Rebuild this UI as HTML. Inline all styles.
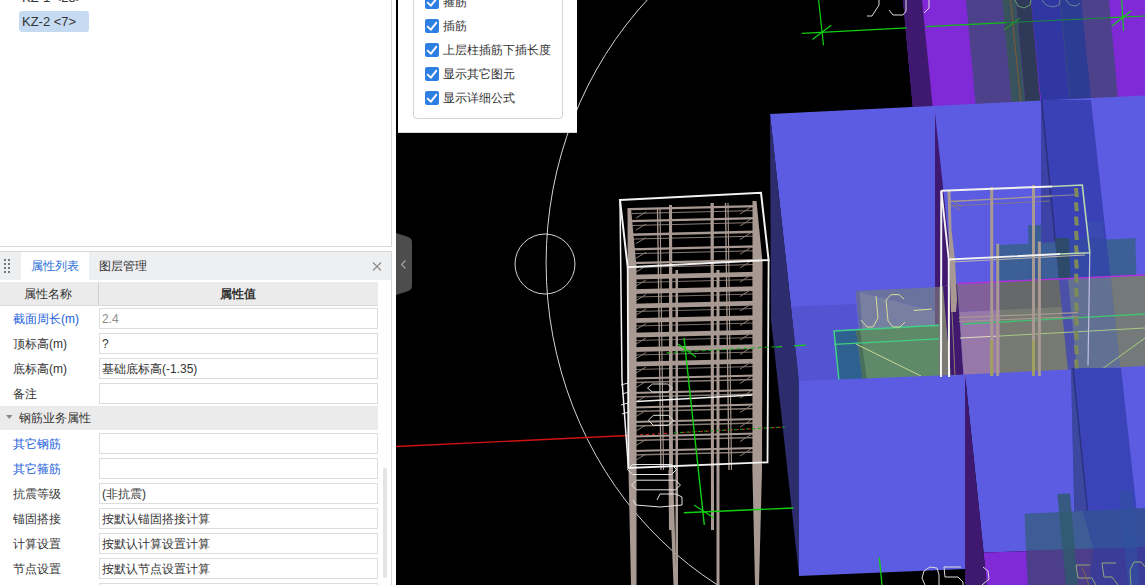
<!DOCTYPE html>
<html><head><meta charset="utf-8">
<style>
html,body{margin:0;padding:0;width:1145px;height:585px;overflow:hidden;background:#fff;font-family:"Liberation Sans",sans-serif;font-size:12px;color:#333;}
.a{position:absolute;}
#vp{position:absolute;left:0;top:0;}
.lbl{position:absolute;left:13px;font-size:12px;color:#333;line-height:14px;white-space:nowrap;}
.blue{color:#2160dc;}
.inp{position:absolute;left:99px;width:277px;height:19px;border:1px solid #dddddd;background:#fff;}
.val{position:absolute;left:102px;font-size:12px;color:#333;line-height:14px;white-space:nowrap;}
.cb{position:absolute;left:425px;width:14px;height:14px;background:#2f7ee2;border-radius:2px;}
.cbt{position:absolute;left:443px;font-size:12px;color:#333;line-height:14px;white-space:nowrap;}
</style></head><body>
<!-- VIEWPORT -->
<svg id="vp" width="1145" height="585" viewBox="0 0 1145 585">
<rect x="396" y="0" width="749" height="585" fill="#000"/>
<!-- VPCONTENT -->
<ellipse cx="898.4" cy="263" rx="352.3" ry="375.2" fill="none" stroke="#d4d4d4" stroke-width="1"/>
<circle cx="545" cy="264" r="30" fill="none" stroke="#d4d4d4" stroke-width="1"/>
<line x1="396.0" y1="446.5" x2="628.0" y2="435.5" stroke="#d01212" stroke-width="1.4"/>
<line x1="628.0" y1="435.5" x2="785.0" y2="427.0" stroke="#c02020" stroke-width="1.2" stroke-dasharray="3,3"/>
<polygon points="903.0,0.0 1145.0,0.0 1145.0,120.0 914.0,120.0" fill="#8029d6"/>
<polygon points="903.0,0.0 922.0,0.0 934.0,120.0 914.0,120.0" fill="#3f1870"/>
<polygon points="966.0,0.0 1002.0,0.0 1013.0,120.0 977.0,120.0" fill="#4e418c"/>
<polygon points="1002.0,0.0 1016.0,0.0 1027.0,120.0 1013.0,120.0" fill="#38525e"/>
<polygon points="1016.0,0.0 1031.0,0.0 1042.0,120.0 1027.0,120.0" fill="#2e3a58"/>
<polygon points="1080.0,0.0 1109.0,0.0 1120.0,120.0 1093.0,120.0" fill="#4e418c"/>
<polygon points="1031.0,0.0 1081.0,0.0 1093.0,120.0 1043.0,120.0" fill="#3137a2"/>
<polygon points="1060.0,0.0 1081.0,0.0 1093.0,120.0 1072.0,120.0" fill="#2c3c92"/>
<line x1="1010.5" y1="0.0" x2="1022.5" y2="120.0" stroke="#8a5a30" stroke-width="0.9"/>
<line x1="1060.0" y1="0.0" x2="1072.0" y2="120.0" stroke="#3a4a80" stroke-width="0.8"/>
<polyline points="867.0,16.0 872.0,16.0 879.0,5.0 879.0,0.0" fill="none" stroke="#dcdcdc" stroke-width="1"/>
<polyline points="889.0,10.0 893.0,15.0 903.0,15.0 906.0,11.0 906.0,0.0" fill="none" stroke="#dcdcdc" stroke-width="1"/>
<polyline points="924.0,13.0 929.0,8.0 929.0,0.0" fill="none" stroke="#dcdcdc" stroke-width="1"/>
<polyline points="1015.0,0.0 1018.0,6.0 1024.0,8.0 1030.0,5.0 1031.0,0.0" fill="none" stroke="#6a9a70" stroke-width="1"/>
<polyline points="1042.0,0.0 1046.0,5.0 1053.0,7.0 1059.0,5.0 1060.0,0.0" fill="none" stroke="#6a80a0" stroke-width="1"/>
<polyline points="1066.0,0.0 1070.0,5.0 1076.0,6.0 1080.0,3.0" fill="none" stroke="#6a80a0" stroke-width="1"/>
<line x1="801.9" y1="33.3" x2="906.7" y2="27.9" stroke="#12d012" stroke-width="1.3"/>
<line x1="926.0" y1="26.6" x2="1006.0" y2="22.7" stroke="#10c010" stroke-width="1.2"/>
<line x1="1006.0" y1="22.7" x2="1110.0" y2="17.7" stroke="#1a8a3a" stroke-width="1"/>
<line x1="1110.0" y1="17.7" x2="1145.0" y2="16.0" stroke="#10c010" stroke-width="1.2"/>
<line x1="818.6" y1="0.0" x2="823.5" y2="45.4" stroke="#12d012" stroke-width="1.2"/>
<line x1="812.4" y1="39.5" x2="831.2" y2="25.2" stroke="#12d012" stroke-width="1.2"/>
<line x1="1121.7" y1="0.0" x2="1123.5" y2="31.0" stroke="#12d012" stroke-width="1.1"/>
<line x1="1112.0" y1="26.0" x2="1131.0" y2="11.0" stroke="#12d012" stroke-width="1.1"/>
<line x1="1004.0" y1="30.0" x2="1020.0" y2="18.0" stroke="#10b010" stroke-width="1"/>
<polygon points="770.0,114.0 1145.0,95.5 1145.0,381.0 799.0,381.0" fill="#5c5ce2"/>
<polygon points="770.0,114.0 799.0,379.0 799.0,576.0 771.0,320.0" fill="#2d2d6e"/>
<polygon points="935.0,113.0 963.5,377.0 935.0,377.0" fill="#3f1870"/>
<polygon points="791.5,306.5 856.0,304.0 863.0,381.0 799.0,381.0" fill="#5454d3"/>
<polygon points="1041.0,100.0 1091.0,100.0 1121.8,380.0 1069.0,380.0" fill="#3a40b6"/>
<polygon points="1041.0,99.0 1069.0,380.0 1041.0,380.0" fill="#3c42a6"/>
<line x1="1041.5" y1="100.0" x2="1069.0" y2="380.0" stroke="#2c3080" stroke-width="1.6"/>
<polygon points="995.3,245.3 1135.4,238.0 1137.0,300.0 997.0,300.0" fill="#3d5f98"/>
<polygon points="1028.0,225.3 1041.0,225.0 1043.0,300.0 1030.0,300.0" fill="#3a5e94"/>
<polygon points="1054.8,238.0 1106.2,238.0 1113.0,300.0 1061.0,300.0" fill="#3448a6"/>
<polygon points="1054.8,238.0 1068.8,238.0 1071.0,300.0 1061.0,300.0" fill="#2e4a6a"/>
<polygon points="1087.6,221.4 1103.0,221.0 1104.0,238.0 1089.0,238.0" fill="#3a4ab0"/>
<polygon points="856.0,291.0 939.0,287.0 939.0,312.5" fill="#6a729e"/>
<polygon points="856.0,291.0 939.0,312.5 939.0,381.0 863.0,381.0" fill="#7880a2"/>
<polygon points="856.0,291.0 859.5,291.0 866.0,381.0 863.0,381.0" fill="#646a9c"/>
<polygon points="935.0,287.2 939.0,287.0 939.0,381.0 935.0,381.0" fill="#6a5878"/>
<polygon points="939.0,287.0 958.0,283.5 963.5,381.0 939.0,381.0" fill="#7c7872"/>
<polygon points="943.0,286.5 957.0,284.0 963.5,377.0 951.0,377.0" fill="#40186e"/>
<polygon points="958.0,283.5 1000.0,281.6 1000.0,310.0 959.6,312.0" fill="#82609a"/>
<polygon points="959.6,312.0 1000.0,310.0 1000.0,381.0 964.0,381.0" fill="#9878a8"/>
<polygon points="1000.0,281.6 1145.0,275.0 1145.0,381.0 1000.0,381.0" fill="#767a72"/>
<polygon points="1000.0,281.6 1145.0,275.0 1145.0,303.0 1000.0,310.0" fill="#66686a"/>
<polygon points="1058.8,278.4 1110.6,276.0 1121.9,381.0 1069.1,381.0" fill="#627094"/>
<polygon points="1058.8,278.4 1067.8,278.0 1078.1,381.0 1069.1,381.0" fill="#4c50a8"/>
<polygon points="1110.6,276.0 1145.0,275.0 1145.0,381.0 1121.9,381.0" fill="#747a7a"/>
<line x1="958.0" y1="283.5" x2="1145.0" y2="275.0" stroke="#b030e0" stroke-width="1.3"/>
<polygon points="834.0,331.0 856.0,329.8 863.0,381.0 839.0,381.0" fill="#2e6090"/>
<polygon points="856.0,329.8 939.0,325.3 939.0,381.0 863.0,381.0" fill="#5e8a6a"/>
<polygon points="856.0,329.8 860.0,329.6 867.0,381.0 863.0,381.0" fill="#4a6e5c"/>
<polygon points="939.0,325.3 963.5,324.0 963.5,381.0 939.0,381.0" fill="#3a2a68" fill-opacity="0.0"/>
<polyline points="839.0,381.0 834.0,331.0 939.0,325.3" fill="none" stroke="#40d088" stroke-width="1.5"/>
<line x1="963.0" y1="324.0" x2="1145.0" y2="314.0" stroke="#40c070" stroke-width="1.3"/>
<line x1="834.0" y1="344.4" x2="939.0" y2="338.9" stroke="#40d080" stroke-width="1.4"/>
<line x1="960.0" y1="338.0" x2="1000.0" y2="336.0" stroke="#e0dcc0" stroke-width="1.1"/>
<line x1="1000.0" y1="336.0" x2="1145.0" y2="328.0" stroke="#a8c888" stroke-width="1"/>
<line x1="856.0" y1="344.0" x2="921.0" y2="376.0" stroke="#c8d890" stroke-width="1"/>
<line x1="1098.0" y1="372.0" x2="1145.0" y2="338.0" stroke="#a8d080" stroke-width="1"/>
<polyline points="876.0,296.0 878.0,318.0 873.0,327.0 867.0,327.0 861.0,320.0" fill="none" stroke="#d8dc98" stroke-width="1"/>
<polyline points="904.0,299.0 899.0,294.6 891.0,294.6 886.0,300.0 888.0,321.0 893.0,327.0 900.0,327.0 905.0,322.0" fill="none" stroke="#d8dc98" stroke-width="1"/>
<line x1="913.8" y1="310.5" x2="931.8" y2="309.0" stroke="#d8dc98" stroke-width="1.1"/>
<polygon points="799.0,381.0 965.0,374.5 965.0,569.0 799.0,576.0" fill="#5c5ce2"/>
<polygon points="965.0,374.5 1145.0,366.0 1145.0,547.7 983.6,552.6" fill="#5c5ce2"/>
<polygon points="983.6,552.6 1145.0,547.7 1145.0,585.0 986.5,585.0" fill="#8029d6"/>
<polygon points="965.0,374.5 987.0,585.0 965.0,585.0" fill="#3f1870"/>
<polygon points="1071.0,368.0 1121.0,368.0 1145.0,585.0 1076.0,585.0" fill="#3a44b8"/>
<polygon points="1071.0,368.0 1073.0,368.0 1095.0,585.0 1076.0,585.0" fill="#3c48a0"/>
<line x1="1073.0" y1="368.0" x2="1095.0" y2="585.0" stroke="#2c3282" stroke-width="1.5"/>
<polygon points="1024.6,513.8 1083.0,511.0 1094.0,550.0 1026.0,550.5" fill="#3e5c96"/>
<polygon points="1026.0,550.5 1094.0,548.5 1089.0,585.0 1027.8,585.0" fill="#4c3e8a"/>
<polygon points="1083.0,511.0 1145.0,508.0 1145.0,550.0 1094.0,550.0" fill="#34509c"/>
<polygon points="1094.0,548.5 1145.0,547.0 1145.0,585.0 1089.0,585.0" fill="#3a3c98"/>
<polygon points="1057.3,494.0 1070.0,493.6 1078.0,585.0 1066.0,585.0" fill="#2e5a6a" fill-opacity="0.8"/>
<polygon points="1119.0,490.8 1132.3,490.5 1140.0,585.0 1128.0,585.0" fill="#3050a0" fill-opacity="0.6"/>
<polyline points="1096.0,585.0 1092.0,578.0 1078.0,578.0 1076.0,565.0 1090.0,565.0" fill="none" stroke="#90a878" stroke-width="1"/>
<polyline points="1118.0,585.0 1112.0,577.0 1104.0,577.0 1102.0,563.0 1116.0,563.0" fill="none" stroke="#90a878" stroke-width="1"/>
<polyline points="1131.0,585.0 1130.0,570.0 1134.0,562.0 1141.0,562.0 1145.0,567.0" fill="none" stroke="#90a878" stroke-width="1"/>
<line x1="1082.0" y1="567.0" x2="1089.0" y2="585.0" stroke="#8a7040" stroke-width="0.8"/>
<polyline points="925.0,585.0 922.0,578.0 924.0,571.0 930.0,567.0 937.0,568.0 939.0,575.0 939.0,585.0" fill="none" stroke="#dcdcdc" stroke-width="1"/>
<polyline points="961.0,567.0 944.0,567.0 945.0,577.0 958.0,577.0 963.0,582.0 963.0,585.0" fill="none" stroke="#dcdcdc" stroke-width="1"/>
<polyline points="982.0,585.0 989.0,579.0 988.0,571.0 983.0,567.0" fill="none" stroke="#dcdcdc" stroke-width="1"/>
<line x1="879.3" y1="557.5" x2="882.0" y2="585.0" stroke="#12d012" stroke-width="1.3"/>
<polygon points="630.0,208.0 757.0,205.0 757.0,207.3 630.0,210.3" fill="#a89a92"/>
<line x1="632.0" y1="213.5" x2="757.0" y2="210.5" stroke="#8a7d76" stroke-width="1"/>
<polygon points="630.0,220.0 757.0,217.0 757.0,219.3 630.0,222.3" fill="#a89a92"/>
<line x1="632.0" y1="225.5" x2="757.0" y2="222.5" stroke="#8a7d76" stroke-width="1"/>
<polygon points="630.0,233.6 757.0,230.6 757.0,232.9 630.0,235.9" fill="#a89a92"/>
<line x1="632.0" y1="239.1" x2="757.0" y2="236.1" stroke="#8a7d76" stroke-width="1"/>
<polygon points="630.0,248.2 757.0,245.2 757.0,247.5 630.0,250.5" fill="#a89a92"/>
<line x1="632.0" y1="253.7" x2="757.0" y2="250.7" stroke="#8a7d76" stroke-width="1"/>
<polygon points="630.0,262.0 757.0,259.0 757.0,261.3 630.0,264.3" fill="#a89a92"/>
<line x1="632.0" y1="267.5" x2="757.0" y2="264.5" stroke="#8a7d76" stroke-width="1"/>
<polygon points="632.0,274.7 757.0,271.7 757.0,276.5 632.0,279.5" fill="#a89a92"/>
<line x1="636.0" y1="282.5" x2="756.0" y2="279.5" stroke="#8a7d76" stroke-width="0.9"/>
<polygon points="632.0,289.2 757.0,286.2 757.0,291.0 632.0,294.0" fill="#a89a92"/>
<line x1="636.0" y1="297.0" x2="756.0" y2="294.0" stroke="#8a7d76" stroke-width="0.9"/>
<polygon points="632.0,303.7 757.0,300.7 757.0,305.5 632.0,308.5" fill="#a89a92"/>
<line x1="636.0" y1="311.5" x2="756.0" y2="308.5" stroke="#8a7d76" stroke-width="0.9"/>
<polygon points="632.0,318.2 757.0,315.2 757.0,320.0 632.0,323.0" fill="#a89a92"/>
<line x1="636.0" y1="326.0" x2="756.0" y2="323.0" stroke="#8a7d76" stroke-width="0.9"/>
<polygon points="632.0,332.7 757.0,329.7 757.0,334.5 632.0,337.5" fill="#a89a92"/>
<line x1="636.0" y1="340.5" x2="756.0" y2="337.5" stroke="#8a7d76" stroke-width="0.9"/>
<polygon points="632.0,347.2 757.0,344.2 757.0,349.0 632.0,352.0" fill="#a89a92"/>
<line x1="636.0" y1="355.0" x2="756.0" y2="352.0" stroke="#8a7d76" stroke-width="0.9"/>
<polygon points="632.0,361.7 757.0,358.7 757.0,363.5 632.0,366.5" fill="#a89a92"/>
<line x1="636.0" y1="369.5" x2="756.0" y2="366.5" stroke="#8a7d76" stroke-width="0.9"/>
<line x1="632.0" y1="378.5" x2="757.0" y2="375.5" stroke="#a89a92" stroke-width="2"/>
<line x1="632.0" y1="382.5" x2="757.0" y2="379.5" stroke="#8a7d76" stroke-width="1.3"/>
<line x1="632.0" y1="393.0" x2="757.0" y2="390.0" stroke="#a89a92" stroke-width="2"/>
<line x1="632.0" y1="397.0" x2="757.0" y2="394.0" stroke="#8a7d76" stroke-width="1.3"/>
<line x1="632.0" y1="407.5" x2="757.0" y2="404.5" stroke="#a89a92" stroke-width="2"/>
<line x1="632.0" y1="411.5" x2="757.0" y2="408.5" stroke="#8a7d76" stroke-width="1.3"/>
<line x1="632.0" y1="422.0" x2="757.0" y2="419.0" stroke="#a89a92" stroke-width="2"/>
<line x1="632.0" y1="426.0" x2="757.0" y2="423.0" stroke="#8a7d76" stroke-width="1.3"/>
<line x1="632.0" y1="436.5" x2="757.0" y2="433.5" stroke="#a89a92" stroke-width="2"/>
<line x1="632.0" y1="440.5" x2="757.0" y2="437.5" stroke="#8a7d76" stroke-width="1.3"/>
<line x1="632.0" y1="451.0" x2="757.0" y2="448.0" stroke="#a89a92" stroke-width="2"/>
<line x1="632.0" y1="455.0" x2="757.0" y2="452.0" stroke="#8a7d76" stroke-width="1.3"/>
<line x1="636.0" y1="218.0" x2="646.0" y2="212.0" stroke="#8a7d76" stroke-width="1"/>
<line x1="740.0" y1="214.0" x2="751.0" y2="207.0" stroke="#8a7d76" stroke-width="1"/>
<line x1="636.0" y1="230.0" x2="646.0" y2="224.0" stroke="#8a7d76" stroke-width="1"/>
<line x1="740.0" y1="226.0" x2="751.0" y2="219.0" stroke="#8a7d76" stroke-width="1"/>
<line x1="636.0" y1="243.6" x2="646.0" y2="237.6" stroke="#8a7d76" stroke-width="1"/>
<line x1="740.0" y1="239.6" x2="751.0" y2="232.6" stroke="#8a7d76" stroke-width="1"/>
<line x1="636.0" y1="258.2" x2="646.0" y2="252.2" stroke="#8a7d76" stroke-width="1"/>
<line x1="740.0" y1="254.2" x2="751.0" y2="247.2" stroke="#8a7d76" stroke-width="1"/>
<line x1="636.0" y1="272.0" x2="646.0" y2="266.0" stroke="#8a7d76" stroke-width="1"/>
<line x1="740.0" y1="268.0" x2="751.0" y2="261.0" stroke="#8a7d76" stroke-width="1"/>
<line x1="636.0" y1="286.0" x2="646.0" y2="280.0" stroke="#8a7d76" stroke-width="1"/>
<line x1="740.0" y1="282.0" x2="751.0" y2="275.0" stroke="#8a7d76" stroke-width="1"/>
<line x1="636.0" y1="300.5" x2="646.0" y2="294.5" stroke="#8a7d76" stroke-width="1"/>
<line x1="740.0" y1="296.5" x2="751.0" y2="289.5" stroke="#8a7d76" stroke-width="1"/>
<line x1="636.0" y1="315.0" x2="646.0" y2="309.0" stroke="#8a7d76" stroke-width="1"/>
<line x1="740.0" y1="311.0" x2="751.0" y2="304.0" stroke="#8a7d76" stroke-width="1"/>
<line x1="636.0" y1="329.5" x2="646.0" y2="323.5" stroke="#8a7d76" stroke-width="1"/>
<line x1="740.0" y1="325.5" x2="751.0" y2="318.5" stroke="#8a7d76" stroke-width="1"/>
<line x1="636.0" y1="344.0" x2="646.0" y2="338.0" stroke="#8a7d76" stroke-width="1"/>
<line x1="740.0" y1="340.0" x2="751.0" y2="333.0" stroke="#8a7d76" stroke-width="1"/>
<line x1="636.0" y1="358.5" x2="646.0" y2="352.5" stroke="#8a7d76" stroke-width="1"/>
<line x1="740.0" y1="354.5" x2="751.0" y2="347.5" stroke="#8a7d76" stroke-width="1"/>
<line x1="636.0" y1="373.0" x2="646.0" y2="367.0" stroke="#8a7d76" stroke-width="1"/>
<line x1="740.0" y1="369.0" x2="751.0" y2="362.0" stroke="#8a7d76" stroke-width="1"/>
<line x1="636.0" y1="387.5" x2="646.0" y2="381.5" stroke="#8a7d76" stroke-width="1"/>
<line x1="740.0" y1="383.5" x2="751.0" y2="376.5" stroke="#8a7d76" stroke-width="1"/>
<line x1="636.0" y1="402.0" x2="646.0" y2="396.0" stroke="#8a7d76" stroke-width="1"/>
<line x1="740.0" y1="398.0" x2="751.0" y2="391.0" stroke="#8a7d76" stroke-width="1"/>
<line x1="636.0" y1="416.5" x2="646.0" y2="410.5" stroke="#8a7d76" stroke-width="1"/>
<line x1="740.0" y1="412.5" x2="751.0" y2="405.5" stroke="#8a7d76" stroke-width="1"/>
<line x1="636.0" y1="431.0" x2="646.0" y2="425.0" stroke="#8a7d76" stroke-width="1"/>
<line x1="740.0" y1="427.0" x2="751.0" y2="420.0" stroke="#8a7d76" stroke-width="1"/>
<line x1="636.0" y1="445.5" x2="646.0" y2="439.5" stroke="#8a7d76" stroke-width="1"/>
<line x1="740.0" y1="441.5" x2="751.0" y2="434.5" stroke="#8a7d76" stroke-width="1"/>
<line x1="636.0" y1="460.0" x2="646.0" y2="454.0" stroke="#8a7d76" stroke-width="1"/>
<line x1="740.0" y1="456.0" x2="751.0" y2="449.0" stroke="#8a7d76" stroke-width="1"/>
<polygon points="627.5,208.0 631.0,208.0 636.5,267.0 636.5,585.0 631.0,585.0 628.5,470.0" fill="#a89a92"/>
<polygon points="752.5,201.0 756.5,201.0 762.5,262.0 762.0,470.0 759.0,585.0 755.0,585.0 752.4,470.0" fill="#a89a92"/>
<polygon points="669.0,205.0 672.0,205.0 673.0,470.0 676.5,585.0 673.5,585.0 669.0,470.0" fill="#a89a92"/>
<polygon points="675.5,270.0 678.0,270.0 678.0,585.0 675.5,585.0" fill="#a89a92"/>
<polygon points="710.5,203.0 713.8,203.0 714.0,530.0 711.0,530.0" fill="#a89a92"/>
<polygon points="716.5,270.0 719.5,270.0 719.5,585.0 716.5,585.0" fill="#a89a92"/>
<polygon points="668.5,470.0 671.5,470.0 672.0,530.0 669.0,530.0" fill="#a89a92"/>
<line x1="657.5" y1="208.0" x2="661.0" y2="470.0" stroke="#a89a92" stroke-width="1.3"/>
<line x1="660.0" y1="208.0" x2="663.5" y2="470.0" stroke="#a89a92" stroke-width="1.1"/>
<line x1="725.5" y1="203.0" x2="729.0" y2="470.0" stroke="#a89a92" stroke-width="1.3"/>
<line x1="728.0" y1="203.0" x2="731.5" y2="470.0" stroke="#a89a92" stroke-width="1.1"/>
<polygon points="620.0,200.0 761.0,192.7 768.6,260.0 627.7,267.2" fill="none" stroke="#f2f2f2" stroke-width="2"/>
<polyline points="627.7,267.2 628.4,468.0 767.5,462.3 768.6,260.0" fill="none" stroke="#f2f2f2" stroke-width="1.8"/>
<polyline points="620.0,200.0 621.0,290.0 622.0,380.0 628.4,468.0" fill="none" stroke="#f2f2f2" stroke-width="1.5"/>
<line x1="636.5" y1="401.4" x2="752.4" y2="395.1" stroke="#f2f2f2" stroke-width="1.5"/>
<polygon points="627.5,469.5 632.5,464.5 671.5,464.5 676.5,469.5 671.5,474.5 632.5,474.5" fill="none" stroke="#e6e6e6" stroke-width="1"/>
<polygon points="631.5,485.0 636.5,480.2 675.5,480.2 680.5,485.0 675.5,489.8 636.5,489.8" fill="none" stroke="#e6e6e6" stroke-width="1"/>
<polyline points="633.0,500.0 636.0,505.0 660.0,507.0 682.0,505.0 682.0,497.0 676.0,494.0 660.0,494.0 657.0,500.0" fill="none" stroke="#e6e6e6" stroke-width="1"/>
<polygon points="648.3,420.3 653.3,415.3 668.3,415.3 673.3,420.3 668.3,425.3 653.3,425.3" fill="none" stroke="#e6e6e6" stroke-width="1"/>
<polygon points="647.5,388.0 652.5,384.0 667.5,384.0 672.5,388.0 667.5,392.0 652.5,392.0" fill="none" stroke="#d8d8d8" stroke-width="1"/>
<polyline points="621.0,385.0 628.0,383.0 629.0,392.0 622.0,394.0" fill="none" stroke="#e6e6e6" stroke-width="1"/>
<polyline points="621.0,405.0 628.0,403.0 629.0,412.0 622.0,414.0" fill="none" stroke="#e6e6e6" stroke-width="1"/>
<line x1="684.0" y1="337.8" x2="704.3" y2="524.8" stroke="#12d012" stroke-width="1.4"/>
<line x1="683.8" y1="512.8" x2="793.4" y2="508.0" stroke="#12d012" stroke-width="1.4"/>
<line x1="694.0" y1="505.0" x2="714.0" y2="518.0" stroke="#12d012" stroke-width="1.2"/>
<line x1="678.0" y1="344.0" x2="696.0" y2="357.0" stroke="#12d012" stroke-width="1.2"/>
<line x1="666.7" y1="352.7" x2="776.7" y2="346.7" stroke="#10b010" stroke-width="1" stroke-dasharray="4,3"/>
<line x1="776.0" y1="347.0" x2="782.0" y2="346.7" stroke="#12d012" stroke-width="1.2"/>
<line x1="794.0" y1="345.8" x2="806.0" y2="345.2" stroke="#12d012" stroke-width="1.3"/>
<line x1="674.0" y1="432.8" x2="785.0" y2="427.0" stroke="#10a010" stroke-width="1" stroke-dasharray="3,3"/>
<line x1="950.4" y1="201.5" x2="1052.0" y2="196.0" stroke="#a89a92" stroke-width="1.3"/>
<line x1="1052.0" y1="196.0" x2="1078.0" y2="194.6" stroke="#8a8aa0" stroke-width="1"/>
<line x1="950.0" y1="206.0" x2="1050.0" y2="201.0" stroke="#8a7d76" stroke-width="0.8"/>
<line x1="951.0" y1="204.0" x2="960.0" y2="210.0" stroke="#8a7d76" stroke-width="1"/>
<line x1="952.0" y1="200.0" x2="961.0" y2="207.0" stroke="#8a7d76" stroke-width="1"/>
<line x1="959.0" y1="317.7" x2="1078.0" y2="312.7" stroke="#a89a92" stroke-width="1.2"/>
<line x1="959.0" y1="321.5" x2="1078.0" y2="316.5" stroke="#a89a92" stroke-width="1.2"/>
<line x1="952.0" y1="262.0" x2="1085.0" y2="255.0" stroke="#c0b5aa" stroke-width="1"/>
<polygon points="947.5,190.0 950.5,190.0 951.5,230.0 955.0,260.0 957.0,300.0 956.0,312.0 951.0,312.0" fill="#a89a92"/>
<line x1="952.0" y1="312.0" x2="955.0" y2="376.0" stroke="#8a7d76" stroke-width="1"/>
<polygon points="990.2,187.0 993.2,187.0 993.2,376.0 990.2,376.0" fill="#a89a92"/>
<polygon points="1032.0,185.0 1035.0,185.0 1035.0,376.0 1032.0,376.0" fill="#a89a92"/>
<polygon points="996.2,243.8 999.2,243.8 999.2,376.0 996.2,376.0" fill="#a89a92"/>
<polygon points="1037.9,241.5 1040.9,241.5 1040.9,376.0 1037.9,376.0" fill="#a89a92"/>
<polygon points="990.2,340.0 993.2,340.0 993.2,376.0 990.2,376.0" fill="#a0a060"/>
<polygon points="1032.0,340.0 1035.0,340.0 1035.0,376.0 1032.0,376.0" fill="#a0a060"/>
<polygon points="1074.0,188.0 1078.0,188.0 1078.8,197.0 1074.8,197.0" fill="#7f8a5a"/>
<polygon points="1074.0,202.3 1078.0,202.3 1078.8,211.3 1074.8,211.3" fill="#7f8a5a"/>
<polygon points="1074.0,216.6 1078.0,216.6 1078.8,225.6 1074.8,225.6" fill="#7f8a5a"/>
<polygon points="1074.0,230.9 1078.0,230.9 1078.8,239.9 1074.8,239.9" fill="#7f8a5a"/>
<polygon points="1074.0,245.2 1078.0,245.2 1078.8,254.2 1074.8,254.2" fill="#7f8a5a"/>
<polygon points="1074.0,259.5 1078.0,259.5 1078.8,268.5 1074.8,268.5" fill="#7f8a5a"/>
<polygon points="1074.0,273.8 1078.0,273.8 1078.8,282.8 1074.8,282.8" fill="#7f8a5a"/>
<polygon points="1074.0,288.1 1078.0,288.1 1078.8,297.1 1074.8,297.1" fill="#7f8a5a"/>
<polygon points="1074.0,302.4 1078.0,302.4 1078.8,311.4 1074.8,311.4" fill="#7f8a5a"/>
<polygon points="1074.0,316.7 1078.0,316.7 1078.8,325.7 1074.8,325.7" fill="#7f8a5a"/>
<polygon points="1074.0,331.0 1078.0,331.0 1078.8,340.0 1074.8,340.0" fill="#7f8a5a"/>
<polygon points="1074.0,345.3 1078.0,345.3 1078.8,354.3 1074.8,354.3" fill="#7f8a5a"/>
<polygon points="1074.0,359.6 1078.0,359.6 1078.8,368.6 1074.8,368.6" fill="#7f8a5a"/>
<polyline points="941.3,190.7 1052.0,186.5" fill="none" stroke="#f2f2f2" stroke-width="2"/>
<polyline points="1052.0,186.5 1082.3,185.0 1089.8,252.7 1060.0,254.0" fill="none" stroke="#b8d8b0" stroke-width="1.6"/>
<polyline points="1060.0,254.0 948.8,259.5 941.3,190.7" fill="none" stroke="#f2f2f2" stroke-width="1.9"/>
<line x1="941.3" y1="190.7" x2="941.0" y2="377.0" stroke="#f2f2f2" stroke-width="2"/>
<line x1="948.8" y1="259.5" x2="949.0" y2="377.0" stroke="#f2f2f2" stroke-width="2"/>
<line x1="1089.8" y1="252.7" x2="1088.0" y2="365.6" stroke="#c0c0e0" stroke-width="1.2"/>
<!-- /VPCONTENT -->
</svg>

<!-- LEFT PANEL -->
<div class="a" style="left:0;top:0;width:396px;height:585px;background:#fff;"></div>
<!-- top list -->
<div class="a" style="left:0;top:0;width:391px;height:246px;border-right:1px solid #d9d9d9;border-bottom:1px solid #d9d9d9;"></div>
<div class="a" style="left:22px;top:-10px;font-size:13px;line-height:15px;color:#333;white-space:nowrap;">KZ-1 &lt;28&gt;</div>
<div class="a" style="left:19px;top:11px;width:70px;height:21px;background:#c6dbf2;border-radius:3px;"></div>
<div class="a" style="left:22px;top:14px;font-size:13px;line-height:15px;color:#333;white-space:nowrap;">KZ-2 &lt;7&gt;</div>

<!-- property panel -->
<div class="a" style="left:0;top:251px;width:391px;height:334px;border-right:1px solid #d9d9d9;border-top:1px solid #d9d9d9;"></div>
<div class="a" style="left:0;top:252px;width:391px;height:28px;background:#eeeff1;"></div>
<div class="a" style="left:21px;top:252px;width:68px;height:28px;background:#fff;"></div>
<div class="a" style="left:4px;top:259px;width:2px;height:2px;background:#777;box-shadow:4px 0 #777,0 4px #777,4px 4px #777,0 8px #777,4px 8px #777,0 12px #777,4px 12px #777;"></div>
<div class="a" style="left:31px;top:259px;font-size:12px;line-height:14px;color:#2a6fd9;white-space:nowrap;">属性列表</div>
<div class="a" style="left:99px;top:259px;font-size:12px;line-height:14px;color:#333;white-space:nowrap;">图层管理</div>
<svg class="a" style="left:371px;top:260px;" width="12" height="12"><path d="M2 2.5L10 10.5M10 2.5L2 10.5" stroke="#8a8a8a" stroke-width="1.1"/></svg>

<div class="a" style="left:0;top:282px;width:378px;height:23px;background:#ebebeb;border-bottom:1px solid #d8d8d8;"></div>
<div class="a" style="left:98px;top:282px;width:1px;height:23px;background:#d0d0d0;"></div>
<div class="a" style="left:24px;top:287px;font-size:12px;line-height:14px;color:#333;white-space:nowrap;">属性名称</div>
<div class="a" style="left:220px;top:287px;font-size:12px;line-height:14px;color:#333;font-weight:bold;white-space:nowrap;">属性值</div>

<!-- rows -->
<div class="lbl blue" style="top:312px;">截面周长(m)</div>
<div class="inp" style="top:308px;"></div><div class="val" style="top:312px;color:#8c8c8c;">2.4</div>
<div class="lbl" style="top:337px;">顶标高(m)</div>
<div class="inp" style="top:333px;"></div><div class="val" style="top:337px;">?</div>
<div class="lbl" style="top:362px;">底标高(m)</div>
<div class="inp" style="top:358px;"></div><div class="val" style="top:362px;">基础底标高(-1.35)</div>
<div class="lbl" style="top:387px;">备注</div>
<div class="inp" style="top:383px;"></div>

<div class="a" style="left:0;top:406px;width:378px;height:24px;background:#ebebeb;"></div>
<svg class="a" style="left:6px;top:415px;" width="7" height="5"><path d="M0 0H6.5L3.25 4Z" fill="#8a8a8a"/></svg>
<div class="a" style="left:19px;top:411px;font-size:12px;line-height:14px;color:#333;white-space:nowrap;">钢筋业务属性</div>

<div class="lbl blue" style="top:437px;">其它钢筋</div>
<div class="inp" style="top:433px;"></div>
<div class="lbl blue" style="top:462px;">其它箍筋</div>
<div class="inp" style="top:458px;"></div>
<div class="lbl" style="top:487px;">抗震等级</div>
<div class="inp" style="top:483px;"></div><div class="val" style="top:487px;">(非抗震)</div>
<div class="lbl" style="top:512px;">锚固搭接</div>
<div class="inp" style="top:508px;"></div><div class="val" style="top:512px;">按默认锚固搭接计算</div>
<div class="lbl" style="top:537px;">计算设置</div>
<div class="inp" style="top:533px;"></div><div class="val" style="top:537px;">按默认计算设置计算</div>
<div class="lbl" style="top:562px;">节点设置</div>
<div class="inp" style="top:558px;"></div><div class="val" style="top:562px;">按默认节点设置计算</div>
<div class="inp" style="top:583px;"></div>
<div class="a" style="left:383px;top:468px;width:4px;height:110px;background:#e4e4e4;border-radius:2px;"></div>

<!-- collapse tab -->
<svg class="a" style="left:396px;top:233px;" width="17" height="62"><path d="M0 0L11 3.5Q16 5 16 9V53Q16 57 11 58.5L0 62Z" fill="#4d4d4d"/><path d="M9.5 27.5L5.5 31.5L9.5 35.5" stroke="#a8a8a8" stroke-width="1.1" fill="none"/></svg>

<!-- floating checkbox panel -->
<div class="a" style="left:398px;top:0;width:179px;height:132px;background:#fff;border-bottom:1px solid #d8d8d8;"></div>
<div class="a" style="left:413px;top:-10px;width:148px;height:127px;border:1px solid #d4d4d4;border-radius:4px;"></div>
<div class="cb" style="top:-5px;"><svg width="14" height="14" style="position:absolute;left:0;top:0"><path d="M2.2 7.3L5.9 10.6L11.8 3.2" stroke="#fff" stroke-width="1.9" fill="none"/></svg></div><div class="cbt" style="top:-5px;">箍筋</div>
<div class="cb" style="top:19px;"><svg width="14" height="14" style="position:absolute;left:0;top:0"><path d="M2.2 7.3L5.9 10.6L11.8 3.2" stroke="#fff" stroke-width="1.9" fill="none"/></svg></div><div class="cbt" style="top:19px;">插筋</div>
<div class="cb" style="top:43px;"><svg width="14" height="14" style="position:absolute;left:0;top:0"><path d="M2.2 7.3L5.9 10.6L11.8 3.2" stroke="#fff" stroke-width="1.9" fill="none"/></svg></div><div class="cbt" style="top:43px;">上层柱插筋下插长度</div>
<div class="cb" style="top:67px;"><svg width="14" height="14" style="position:absolute;left:0;top:0"><path d="M2.2 7.3L5.9 10.6L11.8 3.2" stroke="#fff" stroke-width="1.9" fill="none"/></svg></div><div class="cbt" style="top:67px;">显示其它图元</div>
<div class="cb" style="top:91px;"><svg width="14" height="14" style="position:absolute;left:0;top:0"><path d="M2.2 7.3L5.9 10.6L11.8 3.2" stroke="#fff" stroke-width="1.9" fill="none"/></svg></div><div class="cbt" style="top:91px;">显示详细公式</div>
</body></html>
